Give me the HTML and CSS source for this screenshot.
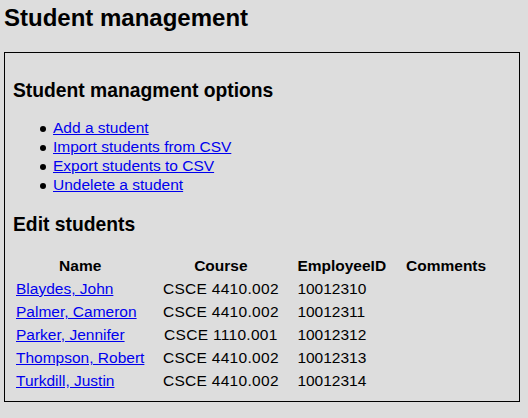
FILE: index.html
```html
<!DOCTYPE html>
<html>
<head>
<meta charset="utf-8">
<title>Student management</title>
<link rel="stylesheet" href="styles.css">
</head>
<body>
<h1 class="title">Student management</h1>
<div class="panel">
  <h2 class="section-title first">Student managment options</h2>
  <ul class="options">
    <li><a href="#">Add a student</a></li>
    <li><a href="#">Import students from CSV</a></li>
    <li><a href="#">Export students to CSV</a></li>
    <li><a href="#">Undelete a student</a></li>
  </ul>
  <h2 class="section-title">Edit students</h2>
  <table class="students">
    <thead>
      <tr>
        <th class="col-name">Name</th>
        <th class="col-course">Course</th>
        <th class="col-id">EmployeeID</th>
        <th class="col-comments">Comments</th>
      </tr>
    </thead>
    <tbody>
      <tr><td><a href="#">Blaydes, John</a></td><td class="course">CSCE 4410.002</td><td>10012310</td><td></td></tr>
      <tr><td><a href="#">Palmer, Cameron</a></td><td class="course">CSCE 4410.002</td><td>10012311</td><td></td></tr>
      <tr><td><a href="#">Parker, Jennifer</a></td><td class="course">CSCE 1110.001</td><td>10012312</td><td></td></tr>
      <tr><td><a href="#">Thompson, Robert</a></td><td class="course">CSCE 4410.002</td><td>10012313</td><td></td></tr>
      <tr><td><a href="#">Turkdill, Justin</a></td><td class="course">CSCE 4410.002</td><td>10012314</td><td></td></tr>
    </tbody>
  </table>
</div>
</body>
</html>
```
FILE: styles.css
```css
html {
  background: #dddddd;
}
body {
  margin: 0;
  padding: 4px 8px 0 4px;
  background: #dddddd;
  color: #000;
  font-family: "Liberation Sans", Arial, sans-serif;
  font-size: 15.5px;
  line-height: 19px;
}
.title {
  margin: 0 0 20px 0;
  font-size: 24px;
  line-height: 28px;
  font-weight: bold;
}
.panel {
  border: 1px solid #000;
  padding: 0 8px 8px 8px;
}
.section-title {
  margin: 19px 0 0 0;
  font-size: 19.3px;
  line-height: 23px;
  font-weight: bold;
}
.section-title.first {
  margin-top: 26px;
}
.options {
  margin: 16px 0 0 0;
  padding-left: 40px;
  list-style: none;
}
.options li::before {
  content: "";
  display: inline-block;
  width: 6px;
  height: 6px;
  border-radius: 50%;
  background: #000;
  vertical-align: middle;
  margin-left: -13.5px;
  margin-right: 7.5px;
}
a {
  color: #0000ee;
  text-decoration: underline;
}
.students {
  margin-top: 17px;
  border-spacing: 2px;
}
.students th,
.students td {
  padding: 1px;
  line-height: 19px;
  text-align: left;
  white-space: nowrap;
}
.students th {
  font-weight: bold;
  text-align: center;
}
.students .col-name { width: 128px; }
.students .col-course { width: 145px; }
.students .col-id { text-align: left; }
.students .col-comments { width: 112px; }
.students td.course {
  text-align: center;
  letter-spacing: 0.3px;
}
```
